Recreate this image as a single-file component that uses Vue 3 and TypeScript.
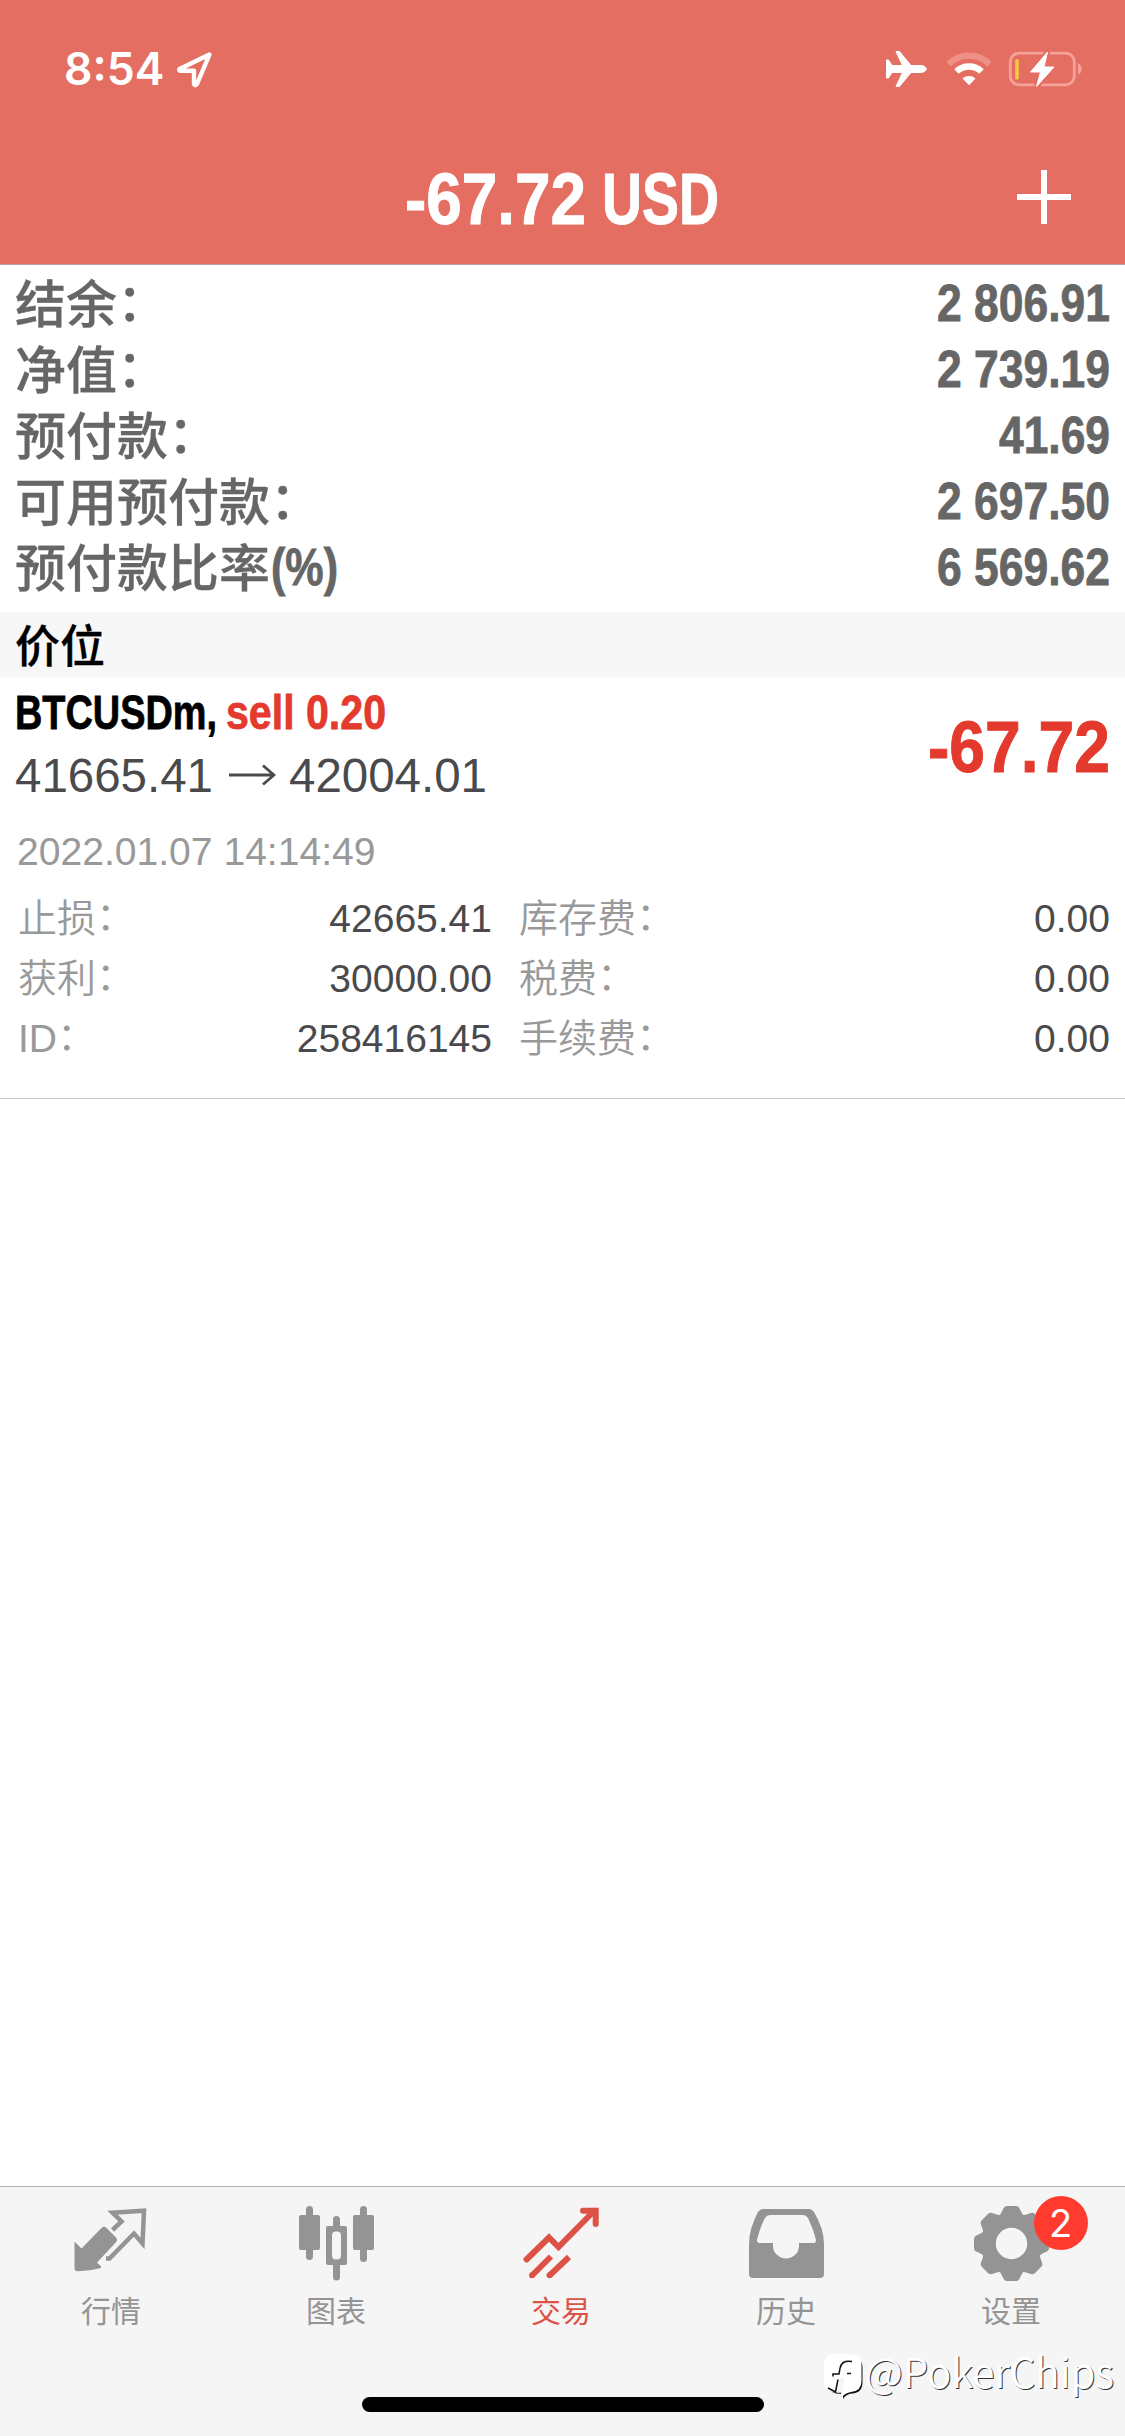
<script setup lang="ts">
import { h, type FunctionalComponent } from 'vue'

interface FitProps {
  text: string
  width: number
  size: number
}

// A line of text condensed (or stretched) to an exact width; its baseline is 0.95em below the top.
const Fit: FunctionalComponent<FitProps> = (props) =>
  h('svg', { width: props.width, height: props.size * 1.2, style: 'display:block;overflow:visible;flex:none' }, [
    h('text', {
      x: 0,
      y: props.size * 0.95,
      'font-size': props.size,
      textLength: props.width,
      lengthAdjust: 'spacingAndGlyphs',
      fill: 'currentColor',
    }, props.text),
  ])
Fit.props = ['text', 'width', 'size']

const summary = [
  { label: '结余', colon: true, suffix: '', value: '2 806.91', width: 173 },
  { label: '净值', colon: true, suffix: '', value: '2 739.19', width: 173 },
  { label: '预付款', colon: true, suffix: '', value: '41.69', width: 111 },
  { label: '可用预付款', colon: true, suffix: '', value: '2 697.50', width: 173 },
  { label: '预付款比率', colon: false, suffix: '(%)', value: '6 569.62', width: 173 },
]

const details = [
  { left: '止损', leftValue: '42665.41', right: '库存费', rightValue: '0.00' },
  { left: '获利', leftValue: '30000.00', right: '税费', rightValue: '0.00' },
  { left: 'ID', leftValue: '258416145', right: '手续费', rightValue: '0.00' },
]

const tabs = [
  { id: 'quotes', label: '行情' },
  { id: 'chart', label: '图表' },
  { id: 'trade', label: '交易' },
  { id: 'history', label: '历史' },
  { id: 'settings', label: '设置' },
]
const activeTab = 'trade'
const toothAngles = [0, 45, 90, 135, 180, 225, 270, 315]
</script>

<template>
  <div class="screen">
    <header class="header">
      <div class="status">
        <div class="status-left">
          <span class="clock">8:54</span>
          <svg class="locate" width="38" height="38" viewBox="176 51 38 38">
            <path d="M209.5 54.5 L179.5 69 Q178.5 70.6 181 70.8 H194 V84 Q195 86.500 197 84 Z" fill="none" stroke="#fff" stroke-width="4.400" stroke-linejoin="round" />
          </svg>
        </div>
        <svg class="status-icons" width="200" height="40" viewBox="884 49 200 40">
          <path d="M886.500 60 H888.500 L892 65.500 H902.500 L896 51.500 H899.500 L911 65.500 H920 C924.500 65.500 926.200 67.500 926.200 69 S924.500 72.500 920 72.500 H911 L899.500 86.500 H896 L902.500 72.500 H892 L888.500 78 H886.500 Z" fill="#fff" stroke="#fff" stroke-width="1" stroke-linejoin="round" />
          <g fill="none">
            <path d="M948.500 64.200 A29 29 0 0 1 989.500 64.200" stroke="#ee9086" stroke-width="6.200" />
            <path d="M956.500 71.500 A18 18 0 0 1 981.500 71.500" stroke="#fff" stroke-width="6.500" />
          </g>
          <path d="M962.500 78.500 A10 10 0 0 1 975.500 78.500 L969 85.200 Z" fill="#fff" />
          <rect x="1010.300" y="53.200" width="64" height="31.600" rx="8.500" fill="none" stroke="#f3a199" stroke-width="2.800" />
          <path d="M1078 63.500 C1083 65 1083 73 1078 74.500 Z" fill="#f3a199" />
          <rect x="1015.200" y="59" width="3.600" height="20.500" rx="1.500" fill="#f7c640" />
          <path d="M1047.500 52 L1030.500 72.500 H1040.500 L1036.500 86.800 L1054 66.500 H1044 Z" fill="#fff" stroke="#e56e62" stroke-width="5" stroke-linejoin="round" />
          <path d="M1047.500 52 L1030.500 72 H1040.500 L1036.500 86.500 L1054 67 H1044 Z" fill="#fff" stroke="#fff" stroke-width="1" stroke-linejoin="round" />
        </svg>
      </div>
      <div class="title-bar">
        <h1 class="title">
          <Fit text="-67.72" :width="181" :size="73" />
          <Fit text="USD" :width="117" :size="73" />
        </h1>
        <svg class="add" width="54" height="54" viewBox="0 0 54 54">
          <path d="M27 0 V54 M0 27 H54" stroke="#fff" stroke-width="6" />
        </svg>
      </div>
    </header>

    <section class="summary">
      <div v-for="row in summary" :key="row.label" class="summary-row">
        <div class="summary-label">
          <span>{{ row.label }}</span>
          <span v-if="row.colon" class="colon">：</span>
          <Fit v-if="row.suffix" class="latin" :text="row.suffix" :width="67" :size="51" />
        </div>
        <Fit class="latin" :text="row.value" :width="row.width" :size="51" />
      </div>
    </section>

    <h2 class="section">价位</h2>

    <section class="position">
      <div class="position-top">
        <div>
          <div class="symbol">
            <Fit text="BTCUSDm," :width="202" :size="49" />
            <Fit class="red" text="sell 0.20" :width="160" :size="49" />
          </div>
          <div class="prices">
            <Fit text="41665.41" :width="198" :size="48" />
            <svg class="to" width="47" height="22" viewBox="0 0 47 22">
              <path d="M0 11 H45 M34 1.500 L45 11 L34 20.500" fill="none" stroke="#4a4a4c" stroke-width="2.800" />
            </svg>
            <Fit text="42004.01" :width="198" :size="48" />
          </div>
        </div>
        <Fit class="profit" text="-67.72" :width="182" :size="73" />
      </div>
      <div class="date">
        <Fit text="2022.01.07 14:14:49" :width="358.500" :size="39" />
      </div>
      <div v-for="row in details" :key="row.left" class="detail">
        <div class="cell cell-left">
          <span class="detail-label">{{ row.left }}<span class="colon-small">：</span></span>
          <span class="detail-value">{{ row.leftValue }}</span>
        </div>
        <div class="cell cell-right">
          <span class="detail-label">{{ row.right }}<span class="colon-small">：</span></span>
          <span class="detail-value">{{ row.rightValue }}</span>
        </div>
      </div>
    </section>

    <nav class="tabs">
      <div class="tab-row">
        <div v-for="tab in tabs" :key="tab.id" class="tab" :class="{ active: tab.id === activeTab }">
          <div class="tab-icon">
            <svg v-if="tab.id === 'quotes'" width="76" height="76" viewBox="0 0 76 76">
              <path d="M1.500 37 Q1.500 35.500 2.500 36.500 L8.500 42.500 L28.500 22 Q31 19.500 33.500 22 L43 31.500 Q45 34 43 36.300 L24 56.500 L28 60.500 Q29 62 27 62.200 Q18 64.500 5 65.300 Q1.500 65.500 1.500 62 Z" fill="currentColor" />
              <path d="M39.500 24 L48.500 15.500 L39.500 6.700 L71 4.700 L69.500 37.500 L61 27.500 L36.500 52.500 H33" fill="none" stroke="currentColor" stroke-width="4.500" />
            </svg>
            <svg v-else-if="tab.id === 'chart'" width="76" height="76" viewBox="0 0 76 76">
              <g stroke="currentColor" stroke-width="7" stroke-linecap="round">
                <path d="M11.500 3.500 V50.500 M65.500 3.500 V52.500 M38.500 13.500 V22 M38.500 60 V71" />
              </g>
              <g fill="currentColor">
                <rect x="1" y="9" width="21" height="35" rx="2" />
                <rect x="55" y="9" width="21" height="35" rx="2" />
                <path d="M30 20 H47 Q49 20 49 22 V57 Q49 59 47 59 H30 Q28 59 28 57 V22 Q28 20 30 20 Z" />
              </g>
              <rect x="34" y="25.500" width="9" height="28" rx="4" fill="#f5f5f5" />
            </svg>
            <svg v-else-if="tab.id === 'trade'" width="76" height="76" viewBox="0 0 76 76">
              <g fill="none" stroke="currentColor" stroke-width="6">
                <path d="M3.500 53.500 L26 31.500 L35.500 41 L71 5" stroke-linecap="round" />
                <path d="M60 4.700 H72.700 V18" stroke-linecap="round" />
                <path d="M9 69.500 L28 50.500 M26.500 69.500 L46 51" />
              </g>
              <circle cx="9" cy="69.300" r="3" fill="currentColor" />
              <circle cx="26.500" cy="69.300" r="3" fill="currentColor" />
            </svg>
            <svg v-else-if="tab.id === 'history'" width="76" height="76" viewBox="0 0 76 76">
              <path d="M15 3 H61 Q64 3 66 6 Q76 23 76 38 V68 Q76 72 72 72 H5 Q1 72 1 68 V38 Q1 23 10 6 Q12 3 15 3 Z" fill="currentColor" />
              <path d="M22 9 H55 Q58 9 60 12 Q65 22 68 34 Q68 37 66 37 H51 V40 A13 12.500 0 0 1 25 40 V37 H11 Q9 37 9 34 Q12 21 17 12 Q19 9 22 9 Z" fill="#f5f5f5" />
            </svg>
            <svg v-else width="76" height="76" viewBox="0 0 76 76">
              <g fill="currentColor" transform="translate(38.500 37.500)">
                <circle r="30.500" />
                <path v-for="a in toothAngles" :key="a" :transform="`rotate(${a})`" d="M-14 -26 Q-10.500 -29 -8.500 -34 Q-7.500 -37.500 -4.500 -37.500 H4.500 Q7.500 -37.500 8.500 -34 Q10.500 -29 14 -26 Z" />
                <circle r="15.700" fill="#f5f5f5" />
              </g>
            </svg>
            <span v-if="tab.id === 'settings'" class="badge">2</span>
          </div>
          <span class="tab-label">{{ tab.label }}</span>
        </div>
      </div>
      <div class="home-bar"></div>
      <div class="watermark">
        <svg class="mark" width="40" height="46" viewBox="0 0 40 46">
          <path d="M12 3 H27 Q38.500 3 38.500 14 V28 Q38.500 39 28 39.500 Q22 40 19 45 L19 40 L12 39.500 Q3 37.500 1.500 30 V13 Z" fill="#111" />
          <path d="M10.500 0 H26.500 Q37.500 0 37.500 11 V27 Q37.500 37 27 38 Q21 39 18 43 L17.500 38.500 H11 Q0 38 0 27 V11 Q0 0 10.500 0 Z" fill="#fff" />
          <path d="M16 23.500 H20.500 L17.500 43 H17 L17.500 38.500 H13 Z" fill="#f5f5f5" />
          <path d="M28 7.500 Q17.500 5.500 16 14.500 L15 20 H9 V22.500 M23 19.500 H27 M14 25.500 L11.500 38 L4 34" fill="none" stroke="#111" stroke-width="1.500" />
        </svg>
        <Fit text="@PokerChips" :width="249" :size="41" />
      </div>
    </nav>
  </div>
</template>

<style>
html,
body {
  margin: 0;
  background: #fff;
}
</style>

<style scoped>
.screen {
  display: flex;
  flex-direction: column;
  width: 1125px;
  height: 2436px;
  overflow: hidden;
  background: #fff;
  color: #4a4a4c;
  font-family: "Liberation Sans", "Noto Sans CJK SC", sans-serif;
}
.header {
  box-sizing: border-box;
  height: 265px;
  border-bottom: 1px solid #b9a4a1;
  background: #e56e62;
  color: #fff;
}
.status {
  display: flex;
  justify-content: space-between;
  height: 89px;
  padding: 49px 41px 0 64px;
  box-sizing: border-box;
}
.status-left {
  display: flex;
}
.clock {
  width: 112px;
  font: 600 44.500px/41px Inter, sans-serif;
  letter-spacing: 0;
}
.locate {
  margin-top: 2px;
}
.title-bar {
  display: flex;
  justify-content: space-between;
  padding: 66px 54px 0 405px;
}
.title {
  display: flex;
  gap: 16px;
  margin: 0;
  font-size: 73px;
  font-weight: 700;
  stroke: currentColor;
  stroke-width: 1px;
}
.add {
  margin-top: 15px;
}
.summary {
  box-sizing: border-box;
  height: 347px;
  padding: 6px 15px 0;
  color: #666;
  font-weight: 700;
}
.summary-row {
  display: flex;
  justify-content: space-between;
  height: 66px;
}
.summary .latin {
  margin-top: 2px;
  stroke: currentColor;
  stroke-width: 0.800px;
}
.summary-label {
  display: flex;
  font: 500 51px/60px "Noto Sans CJK SC", sans-serif;
  -webkit-text-stroke: 0.300px currentColor;
}
.summary-label .latin {
  margin-left: 1px;
  font-family: "Liberation Sans", sans-serif;
  font-weight: 700;
}
.colon {
  line-height: 57px;
}
.section {
  height: 65px;
  margin: 0;
  padding-left: 15px;
  background: #f7f7f7;
  color: #000;
  font: 500 45px/63px "Noto Sans CJK SC", sans-serif;
  -webkit-text-stroke: 0.300px currentColor;
}
.position {
  height: 421px;
  border-bottom: 1px solid #c4c4c4;
}
.position-top {
  display: flex;
  justify-content: space-between;
  height: 156px;
  padding: 0 15px;
}
.symbol {
  display: flex;
  gap: 9px;
  padding-top: 5px;
  color: #000;
  font-weight: 700;
  stroke: currentColor;
  stroke-width: 0.800px;
}
.symbol .red,
.profit {
  color: #e43a2e;
}
.profit {
  margin-top: 26px;
  font-weight: 700;
  stroke: currentColor;
  stroke-width: 1px;
}
.prices {
  display: flex;
  margin-top: 5px;
}
.to {
  margin: 18px 13px 0 16px;
}
.date {
  height: 69px;
  margin-top: -5px;
  padding-left: 17px;
  color: #999;
}
.detail {
  display: flex;
  height: 60px;
}
.cell {
  display: flex;
  justify-content: space-between;
  box-sizing: border-box;
  font-size: 39px;
  line-height: 44px;
}
.cell-left {
  width: 492px;
  padding-left: 18px;
}
.cell-right {
  width: 618px;
  padding-left: 27px;
}
.detail-label {
  color: #999;
  font-weight: 350;
}
.colon-small {
  position: relative;
  top: -2px;
}
.tabs {
  position: relative;
  margin-top: auto;
  box-sizing: border-box;
  height: 250px;
  border-top: 1px solid #b2b2b2;
  background: #f5f5f5;
}
.tab-row {
  display: flex;
  margin-left: -2px;
}
.tab {
  display: flex;
  flex: none;
  flex-direction: column;
  align-items: center;
  width: 225px;
  padding-top: 19px;
  color: #949494;
}
.tab.active {
  color: #dd5247;
}
.tab-icon {
  position: relative;
  width: 76px;
  height: 76px;
}
.tab-label {
  margin-top: 7px;
  padding-left: 1px;
  font: 400 30px/40px "Noto Sans CJK SC", sans-serif;
}
.badge {
  position: absolute;
  left: 61px;
  top: -10px;
  width: 54px;
  height: 54px;
  border-radius: 50%;
  background: #ff3b30;
  color: #fff;
  font: 400 38px/54px Inter, sans-serif;
  text-align: center;
}
.home-bar {
  width: 402px;
  height: 15px;
  margin: 68px auto 0;
  border-radius: 8px;
  background: #000;
}
.watermark {
  position: absolute;
  left: 824px;
  top: 162px;
  display: flex;
  gap: 1px;
  color: #fff;
  font-family: "Noto Sans CJK SC", sans-serif;
  font-weight: 350;
  text-shadow: 1px 1px 0 #333;
}
.mark {
  margin-top: 5px;
}
</style>
